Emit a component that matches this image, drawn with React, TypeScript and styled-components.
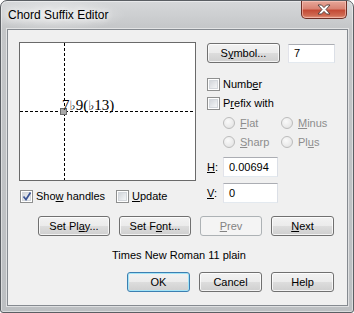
import React from 'react';
import styled, { createGlobalStyle, css } from 'styled-components';

const GlobalStyle = createGlobalStyle`
	html, body {
		margin: 0;
		padding: 0;
		background: #ffffff;
	}
	body {
		font-family: 'Liberation Sans', Arial, sans-serif;
		font-size: 11px;
		color: #000000;
	}
`;

const Window = styled.div`
	box-sizing: border-box;
	width: 354px;
	height: 313px;
	display: flex;
	flex-direction: column;
	padding: 0 5px 6px 6px;
	border: 1px solid #5a5e63;
	border-radius: 7px 7px 3px 3px;
	background:
		radial-gradient(ellipse 70px 16px at 55px 14px, rgba(255, 255, 255, 0.55), rgba(255, 255, 255, 0) 100%),
		linear-gradient(180deg, #d6d8da 0%, #c4c6c8 28px, #bcbfc2 100%);
	box-shadow: inset 0 0 0 1px rgba(255, 255, 255, 0.45);
`;

const TitleBar = styled.div`
	height: 28px;
	display: flex;
	justify-content: space-between;
	align-items: flex-start;
`;

const Title = styled.div`
	margin-left: 1px;
	padding-top: 7px;
	font-size: 12px;
	line-height: 14px;
	color: #000000;
	text-shadow: 0 0 6px #ffffff, 0 0 10px #ffffff;
`;

const CloseButton = styled.div`
	box-sizing: border-box;
	width: 46px;
	height: 18px;
	margin-right: 1px;
	display: flex;
	align-items: center;
	justify-content: center;
	border: 1px solid #6e2f26;
	border-top: none;
	border-radius: 0 0 5px 5px;
	background: linear-gradient(180deg, #e7a799 0%, #d98474 45%, #c44b36 55%, #cf6a52 85%, #e39a82 100%);
	box-shadow: inset 0 0 0 1px rgba(255, 210, 200, 0.55);

	svg {
		display: block;
	}
`;

const Client = styled.div`
	flex: 1;
	display: flex;
	flex-direction: column;
	padding: 12px 13px 0 11px;
	background: #f0f0f0;
	border: 1px solid #858a90;
	box-shadow: 0 0 0 1px rgba(255, 255, 255, 0.5);
`;

const TopGrid = styled.div`
	display: grid;
	grid-template-columns: 177px 1fr;
	column-gap: 11px;
`;

const Column = styled.div`
	display: flex;
	flex-direction: column;
`;

const Canvas = styled.div`
	position: relative;
	box-sizing: border-box;
	width: 177px;
	height: 139px;
	background: #ffffff;
	border: 1px solid #6a6a6a;

	svg {
		position: absolute;
		left: 0;
		top: 0;
	}
`;

const ChordText = styled.span`
	position: absolute;
	left: 42px;
	top: 55px;
	font-family: 'Liberation Serif', 'DejaVu Serif', serif;
	font-size: 15px;
	line-height: 15px;
	white-space: nowrap;
`;

const Flat = styled.span`
	font-family: 'DejaVu Sans', serif;
	font-size: 13px;
`;

const CheckRow = styled.div`
	margin-top: 9px;
	height: 13px;
	display: flex;
	align-items: center;
	padding-left: 1px;
`;

const CheckItem = styled.div<{ $width?: number; $mt?: number }>`
	display: flex;
	align-items: center;
	gap: 3px;
	height: 13px;
	width: ${(p) => (p.$width ? `${p.$width}px` : 'auto')};
	margin-top: ${(p) => p.$mt ?? 0}px;
	white-space: nowrap;
`;

const Box = styled.span`
	box-sizing: border-box;
	position: relative;
	width: 13px;
	height: 13px;
	flex: none;
	border: 1px solid #8e8f8f;
	background: linear-gradient(135deg, #c9cdd3 0%, #eef0f2 70%, #f7f7f7 100%);
	box-shadow: inset 0 0 0 1px #ffffff, inset 0 0 0 2px #d3d7dc;

	svg {
		position: absolute;
		left: 1px;
		top: 0;
	}
`;

const Label = styled.span<{ $disabled?: boolean }>`
	line-height: 13px;
	color: ${(p) => (p.$disabled ? '#8d8d8d' : '#000000')};
`;

const Row = styled.div<{ $mt?: number; $gap?: number }>`
	display: flex;
	align-items: center;
	margin-top: ${(p) => p.$mt ?? 0}px;
	gap: ${(p) => p.$gap ?? 0}px;
`;

const TextField = styled.div<{ $width: number; $height?: number }>`
	box-sizing: border-box;
	width: ${(p) => p.$width}px;
	height: ${(p) => p.$height ?? 20}px;
	padding-left: 5px;
	display: flex;
	align-items: center;
	background: #ffffff;
	border: 1px solid;
	border-color: #abadb3 #dbdfe6 #e3e9ef #e2e3ea;
`;

const FieldLabel = styled.span`
	width: 16px;
	line-height: 14px;
`;

const RadioGrid = styled.div`
	margin-top: 7px;
	margin-left: 16px;
	display: grid;
	grid-template-columns: 58px auto;
	grid-auto-rows: 12px;
	row-gap: 7px;
`;

const RadioItem = styled.div`
	display: flex;
	align-items: center;
	gap: 5px;
	height: 12px;
`;

const Radio = styled.span`
	box-sizing: border-box;
	width: 12px;
	height: 12px;
	border-radius: 50%;
	border: 1px solid #bcbcbc;
	background: radial-gradient(circle at 40% 35%, #fafafa 0%, #eaeaea 60%, #dcdcdc 100%);
`;

const ButtonRow = styled.div<{ $mt: number }>`
	display: flex;
	justify-content: flex-end;
	gap: 9px;
	margin-top: ${(p) => p.$mt}px;
`;

const Button = styled.div<{ $width: number; $variant?: 'default' | 'disabled' }>`
	box-sizing: border-box;
	width: ${(p) => p.$width}px;
	height: 20px;
	display: flex;
	align-items: center;
	justify-content: center;
	border: 1px solid #707070;
	border-radius: 3px;
	background: linear-gradient(180deg, #f2f2f2 0%, #ebebeb 50%, #dddddd 50%, #cfcfcf 100%);
	box-shadow: inset 0 0 0 1px rgba(255, 255, 255, 0.75);
	white-space: nowrap;

	${(p) =>
		p.$variant === 'default' &&
		css`
			border-color: #3c7fb1;
			box-shadow: inset 0 0 0 1px #a3e4f7;
		`}

	${(p) =>
		p.$variant === 'disabled' &&
		css`
			border-color: #adb2b5;
			background: #f4f4f4;
			box-shadow: none;
			color: #838383;
		`}
`;

const FontInfo = styled.div`
	margin-top: 12px;
	height: 14px;
	line-height: 14px;
	text-align: center;
	padding-left: 5px;
`;

const CheckMark = () => (
	<svg width="10" height="11" viewBox="0 0 10 11">
		<path d="M1.5 5.5 L4 8.5 L8.5 1.5" fill="none" stroke="#3b5494" strokeWidth="1.7" />
	</svg>
);

const CloseGlyph = () => (
	<svg width="14" height="11" viewBox="0 0 14 11">
		<path
			d="M1 1 H4.5 L7 3.6 L9.5 1 H13 L9 5.5 L13 10 H9.5 L7 7.4 L4.5 10 H1 L5 5.5 Z"
			fill="#ffffff"
			stroke="#4d3a38"
			strokeWidth="0.9"
			strokeLinejoin="round"
		/>
	</svg>
);

const Checkbox = ({ checked }: { checked?: boolean }) => <Box>{checked && <CheckMark />}</Box>;

const RADIOS = [
	{ id: 'flat', first: 'F', rest: 'lat' },
	{ id: 'minus', first: 'M', rest: 'inus' },
	{ id: 'sharp', first: 'S', rest: 'harp' },
	{ id: 'plus', first: 'Pl', under: 'u', rest: 's' },
];

const App = () => {
	return (
		<>
			<GlobalStyle />
			<Window>
				<TitleBar>
					<Title>Chord Suffix Editor</Title>
					<CloseButton>
						<CloseGlyph />
					</CloseButton>
				</TitleBar>
				<Client>
					<TopGrid>
						<Column>
							<Canvas>
								<svg width="175" height="137">
									<line x1="44.5" y1="0" x2="44.5" y2="137" stroke="#000" strokeDasharray="3 2" />
									<line x1="0" y1="68.5" x2="175" y2="68.5" stroke="#000" strokeDasharray="3 2" />
									<rect x="40.5" y="65.5" width="6" height="6" fill="#a9a9a9" stroke="#6a6a6a" />
								</svg>
								<ChordText>
									7<Flat>♭</Flat>9(<Flat>♭</Flat>13)
								</ChordText>
							</Canvas>
							<CheckRow>
								<CheckItem $width={96}>
									<Checkbox checked />
									<Label>
										Sho<u>w</u> handles
									</Label>
								</CheckItem>
								<CheckItem>
									<Checkbox />
									<Label>
										<u>U</u>pdate
									</Label>
								</CheckItem>
							</CheckRow>
						</Column>
						<Column>
							<Row $mt={1} $gap={8}>
								<Button $width={73}>
									S<u>y</u>mbol...
								</Button>
								<TextField $width={47} $height={19}>
									7
								</TextField>
							</Row>
							<CheckItem $mt={15}>
								<Checkbox />
								<Label>
									Numb<u>e</u>r
								</Label>
							</CheckItem>
							<CheckItem $mt={6}>
								<Checkbox />
								<Label>
									P<u>r</u>efix with
								</Label>
							</CheckItem>
							<RadioGrid>
								{RADIOS.map(({ id, first, under, rest }) => (
									<RadioItem key={id}>
										<Radio />
										<Label $disabled>
											{under ? first : <u>{first}</u>}
											{under && <u>{under}</u>}
											{rest}
										</Label>
									</RadioItem>
								))}
							</RadioGrid>
							<Row $mt={9}>
								<FieldLabel>
									<u>H</u>:
								</FieldLabel>
								<TextField $width={55}>0.00694</TextField>
							</Row>
							<Row $mt={6}>
								<FieldLabel>
									<u>V</u>:
								</FieldLabel>
								<TextField $width={55}>0</TextField>
							</Row>
						</Column>
					</TopGrid>
					<ButtonRow $mt={13}>
						<Button $width={72}>
							Set Pl<u>a</u>y...
						</Button>
						<Button $width={72}>
							Set F<u>o</u>nt...
						</Button>
						<Button $width={62} $variant="disabled">
							<u>P</u>rev
						</Button>
						<Button $width={63}>
							<u>N</u>ext
						</Button>
					</ButtonRow>
					<FontInfo>Times New Roman 11 plain</FontInfo>
					<ButtonRow $mt={10}>
						<Button $width={63} $variant="default">
							OK
						</Button>
						<Button $width={63}>Cancel</Button>
						<Button $width={63}>Help</Button>
					</ButtonRow>
				</Client>
			</Window>
		</>
	);
};

export default App;
